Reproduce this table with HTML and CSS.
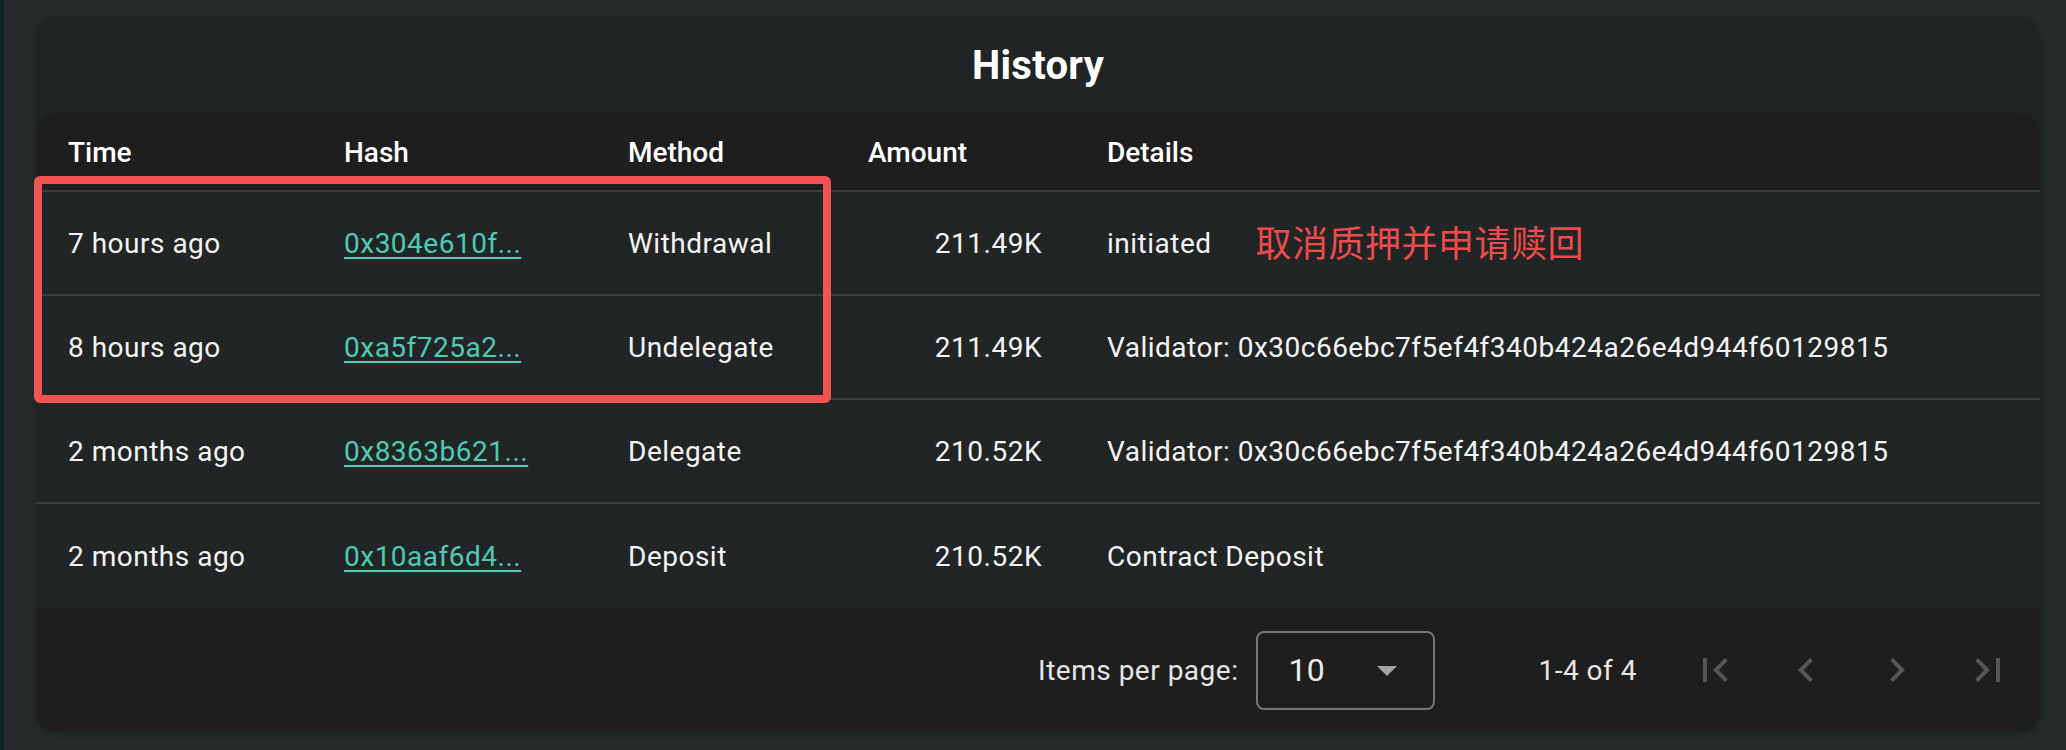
FILE: index.html
```html
<!DOCTYPE html>
<html lang="en">
<head>
<meta charset="utf-8">
<title>History</title>
<link rel="stylesheet" href="styles.css">
</head>
<body>
<div class="page">
  <section class="card">
    <h2 class="card-title">History</h2>
    <div class="table">
      <div class="row head">
        <div class="cell">Time</div>
        <div class="cell">Hash</div>
        <div class="cell">Method</div>
        <div class="cell amount">Amount</div>
        <div class="cell">Details</div>
      </div>
      <div class="row">
        <div class="cell">7 hours ago</div>
        <div class="cell"><a class="hash" href="#">0x304e610f...</a></div>
        <div class="cell">Withdrawal</div>
        <div class="cell amount">211.49K</div>
        <div class="cell">initiated<span class="note">取消质押并申请赎回</span></div>
      </div>
      <div class="row">
        <div class="cell">8 hours ago</div>
        <div class="cell"><a class="hash" href="#">0xa5f725a2...</a></div>
        <div class="cell">Undelegate</div>
        <div class="cell amount">211.49K</div>
        <div class="cell">Validator: 0x30c66ebc7f5ef4f340b424a26e4d944f60129815</div>
      </div>
      <div class="row">
        <div class="cell">2 months ago</div>
        <div class="cell"><a class="hash" href="#">0x8363b621...</a></div>
        <div class="cell">Delegate</div>
        <div class="cell amount">210.52K</div>
        <div class="cell">Validator: 0x30c66ebc7f5ef4f340b424a26e4d944f60129815</div>
      </div>
      <div class="row">
        <div class="cell">2 months ago</div>
        <div class="cell"><a class="hash" href="#">0x10aaf6d4...</a></div>
        <div class="cell">Deposit</div>
        <div class="cell amount">210.52K</div>
        <div class="cell">Contract Deposit</div>
      </div>
    </div>
    <div class="paginator">
      <span class="page-label">Items per page:</span>
      <div class="select">
        <span class="select-value">10</span>
        <svg class="select-arrow" width="20" height="10" viewBox="0 0 20 10"><polygon points="0,0 20,0 10,10" fill="#a3a3a3"/></svg>
      </div>
      <span class="range">1-4 of 4</span>
      <div class="nav">
        <button class="nav-btn" aria-label="First page"><svg width="48" height="48" viewBox="0 0 24 24"><path d="M18.41 16.59L13.82 12l4.59-4.59L17 6l-6 6 6 6zM6 6h2v12H6z" fill="currentColor"/></svg></button>
        <button class="nav-btn" aria-label="Previous page"><svg width="48" height="48" viewBox="0 0 24 24"><path d="M15.41 7.41L14 6l-6 6 6 6 1.41-1.41L10.83 12z" fill="currentColor"/></svg></button>
        <button class="nav-btn" aria-label="Next page"><svg width="48" height="48" viewBox="0 0 24 24"><path d="M10 6L8.59 7.41 13.17 12l-4.58 4.59L10 18l6-6z" fill="currentColor"/></svg></button>
        <button class="nav-btn" aria-label="Last page"><svg width="48" height="48" viewBox="0 0 24 24"><path d="M5.59 7.41L10.18 12l-4.59 4.59L7 18l6-6-6-6zM16 6h2v12h-2z" fill="currentColor"/></svg></button>
      </div>
    </div>
  </section>
  <div class="highlight"></div>
</div>
</body>
</html>
```

FILE: styles.css
```css
html, body {
  margin: 0;
  padding: 0;
}

body {
  width: 2066px;
  height: 750px;
  overflow: hidden;
  background: #242b2a;
  font-family: Roboto, "Noto Sans CJK SC", sans-serif;
  color: #f4f4f4;
}

.page {
  position: relative;
  box-sizing: border-box;
  height: 750px;
  border-left: 4px solid #0b2721;
  padding: 17px 26px 0 32px;
}

.card {
  height: 715px;
  display: flex;
  flex-direction: column;
  background: #212425;
  border-radius: 20px;
  overflow: hidden;
  box-shadow: 0 2px 6px rgba(0, 0, 0, 0.25);
}

.card-title {
  margin: 0;
  height: 96px;
  display: flex;
  align-items: center;
  justify-content: center;
  font-size: 40px;
  font-weight: 700;
  color: #ffffff;
  letter-spacing: 0.3px;
}

.table {
  background: #1e1e1e;
  border-radius: 20px 20px 0 0;
}

.row {
  display: grid;
  grid-template-columns: 276px 284px 240px 239px 1fr;
  align-items: center;
  box-sizing: border-box;
  height: 104px;
  padding-left: 32px;
  padding-top: 2px;
  background: #222526;
  border-bottom: 2px solid #393c3d;
  font-size: 28px;
  line-height: 34px;
  letter-spacing: 0.5px;
  color: #f4f4f4;
  white-space: nowrap;
}

.row:last-child {
  border-bottom: none;
}

.row.head {
  height: 79px;
  padding-top: 2px;
  background: transparent;
  font-weight: 500;
  letter-spacing: 0;
  color: #ffffff;
}

.amount {
  text-align: right;
  padding-right: 65px;
}

.head .amount {
  text-align: left;
  padding-right: 0;
}

.hash {
  color: #4fcab4;
  text-decoration: underline;
  text-decoration-thickness: 2px;
  text-underline-offset: 4px;
}

.note {
  margin-left: 44px;
  font-family: "Noto Sans CJK SC", sans-serif;
  font-size: 36px;
  line-height: 0;
  letter-spacing: 0.5px;
  color: #ee4c4c;
  vertical-align: -4px;
}

.paginator {
  flex: 1;
  display: flex;
  align-items: center;
  justify-content: flex-end;
  padding-right: 7px;
  background: #1e1e1e;
  font-size: 28px;
  letter-spacing: 0.5px;
  color: #e6e6e6;
}

.page-label {
  margin-right: 18px;
}

.select {
  box-sizing: border-box;
  width: 179px;
  height: 79px;
  display: flex;
  align-items: center;
  justify-content: space-between;
  padding: 0 36px 0 30px;
  border: 2px solid #767676;
  border-radius: 8px;
}

.select-value {
  font-size: 32px;
  letter-spacing: 0.3px;
  color: #ececec;
}

.select-arrow {
  display: block;
  margin-top: 2px;
}

.range {
  margin-left: 103px;
}

.nav {
  display: flex;
  margin-left: 32px;
}

.nav-btn {
  width: 91px;
  height: 91px;
  display: flex;
  align-items: center;
  justify-content: center;
  padding: 0;
  border: none;
  background: transparent;
  color: #555757;
}

.nav-btn svg {
  display: block;
}

.highlight {
  position: absolute;
  left: 30px;
  top: 176px;
  width: 797px;
  height: 227px;
  box-sizing: border-box;
  border: 8px solid #f25454;
  border-radius: 6px;
}
```
